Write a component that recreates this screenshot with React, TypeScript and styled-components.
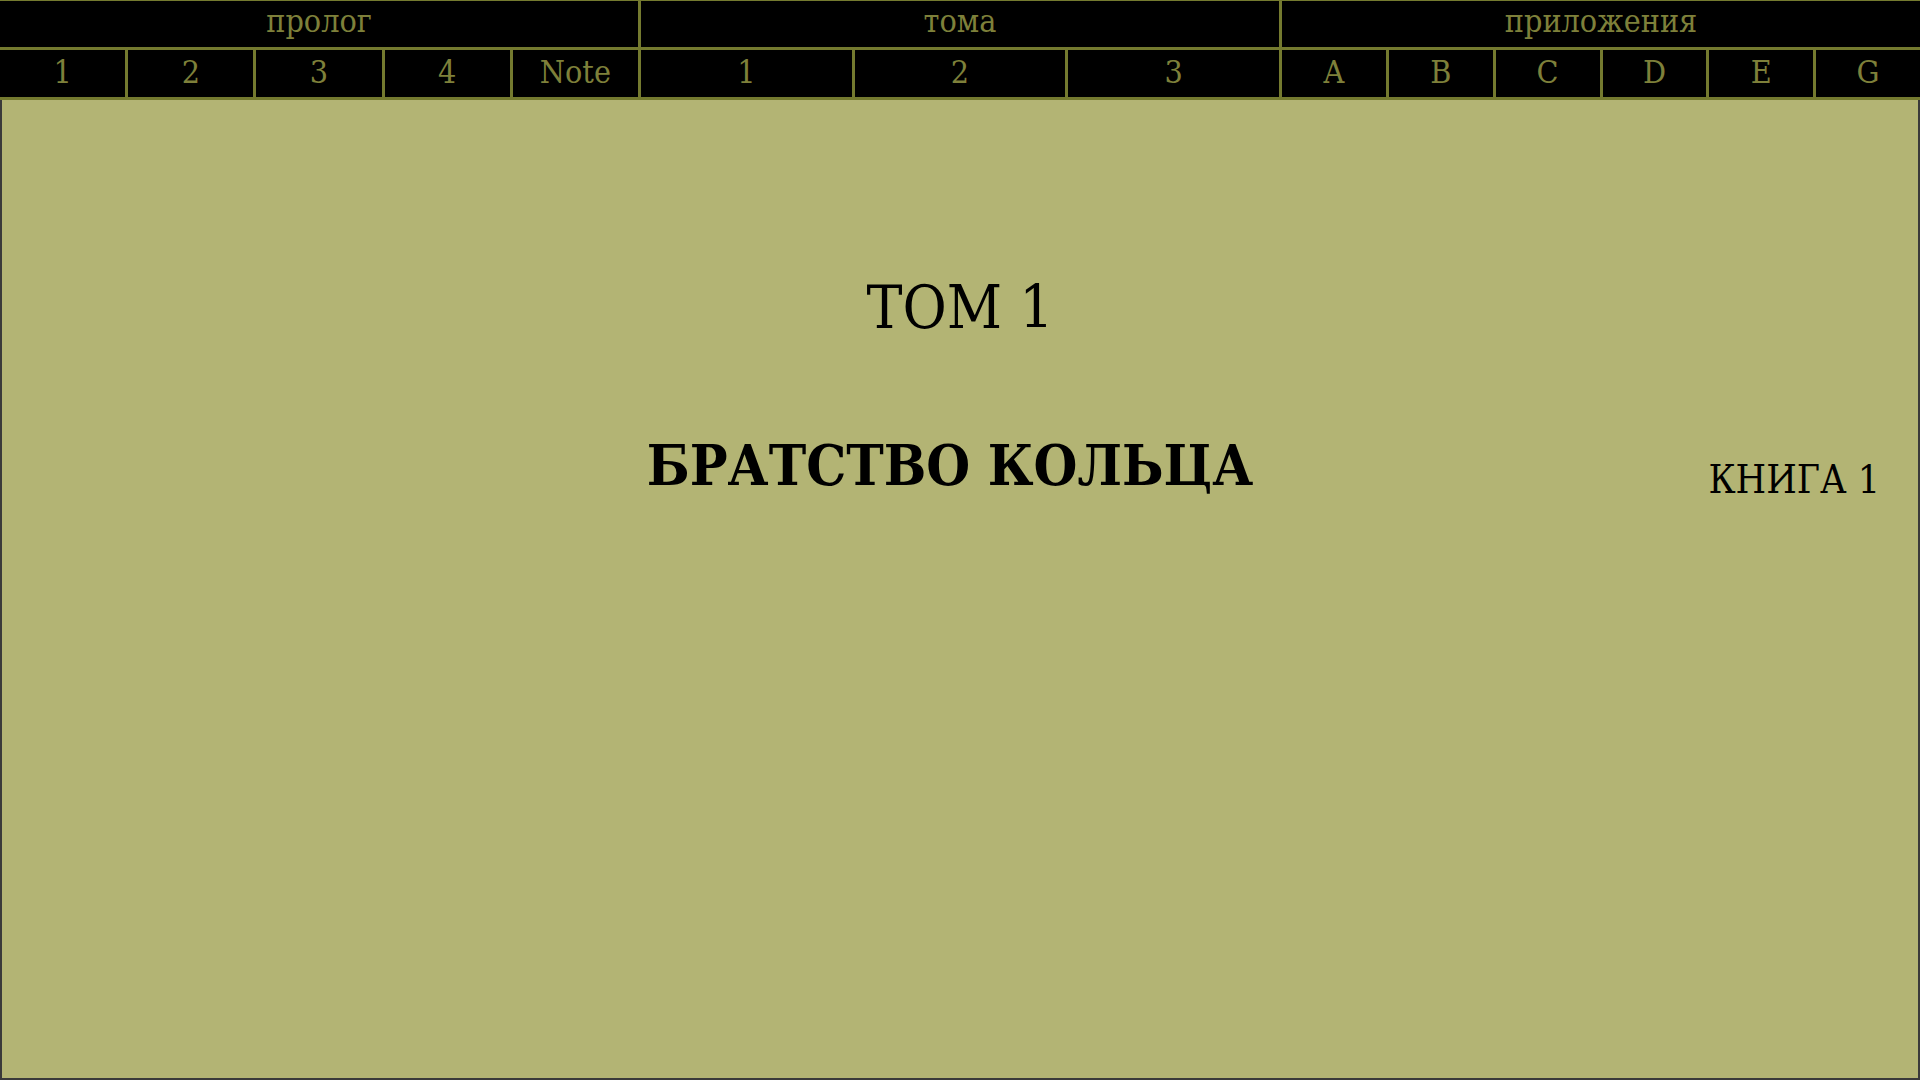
import React from 'react';
import styled, { createGlobalStyle } from 'styled-components';

const GlobalStyle = createGlobalStyle`
  html, body {
    margin: 0;
    padding: 0;
    background: #000;
  }
  body {
    font-family: "DejaVu Serif", "Liberation Serif", serif;
    font-stretch: condensed;
  }
`;

const groups = [
  { title: 'пролог', items: ['1', '2', '3', '4', 'Note'] },
  { title: 'тома', items: ['1', '2', '3'] },
  { title: 'приложения', items: ['A', 'B', 'C', 'D', 'E', 'G'] },
];

function App() {
  return (
    <>
      <GlobalStyle />
      <Page>
        <Header>
          {groups.map((g) => (
            <Group key={g.title}>
              <GroupTitle>{g.title}</GroupTitle>
              <SubRow cols={g.items.length}>
                {g.items.map((it) => (
                  <Cell key={it}>{it}</Cell>
                ))}
              </SubRow>
            </Group>
          ))}
        </Header>
        <Main>
          <Volume>ТОМ 1</Volume>
          <TitleRow>
            <span />
            <BookTitle>БРАТСТВО КОЛЬЦА</BookTitle>
            <BookNo>КНИГА 1</BookNo>
          </TitleRow>
        </Main>
      </Page>
    </>
  );
}

export default App;

const Page = styled.div`
  display: flex;
  flex-direction: column;
  height: 100vh;
`;

const Header = styled.div`
  display: grid;
  grid-template-columns: repeat(3, 1fr);
  column-gap: 3px;
  padding: 1px 0 3px;
  background: #747a2f;
`;

const Group = styled.div`
  display: grid;
  grid-template-rows: 46px 47px;
  row-gap: 3px;
`;

const GroupTitle = styled.div`
  display: flex;
  align-items: center;
  justify-content: center;
  background: #000;
  color: #7e803a;
  font-size: 32px;
  padding-bottom: 6px;
`;

const SubRow = styled.div<{ cols: number }>`
  display: grid;
  grid-template-columns: repeat(${(p) => p.cols}, 1fr);
  column-gap: 3px;
`;

const Cell = styled.div`
  display: flex;
  align-items: center;
  justify-content: center;
  background: #000;
  color: #7e803a;
  font-size: 32px;
  padding-bottom: 3px;
`;

const Main = styled.div`
  flex: 1;
  background: #b3b474;
  border: 2px solid #3a3a3a;
  border-top: none;
  color: #000;
  padding-top: 172px;
`;

const Volume = styled.div`
  text-align: center;
  font-size: 60px;
  line-height: 70px;
`;

const TitleRow = styled.div`
  display: grid;
  grid-template-columns: 1fr auto 1fr;
  align-items: center;
  padding: 0 38px 0 18px;
  margin-top: 85px;
`;

const BookTitle = styled.div`
  font-size: 56px;
  font-weight: bold;
  line-height: 70px;
`;

const BookNo = styled.div`
  justify-self: end;
  font-size: 39px;
  padding-top: 30px;
`;
